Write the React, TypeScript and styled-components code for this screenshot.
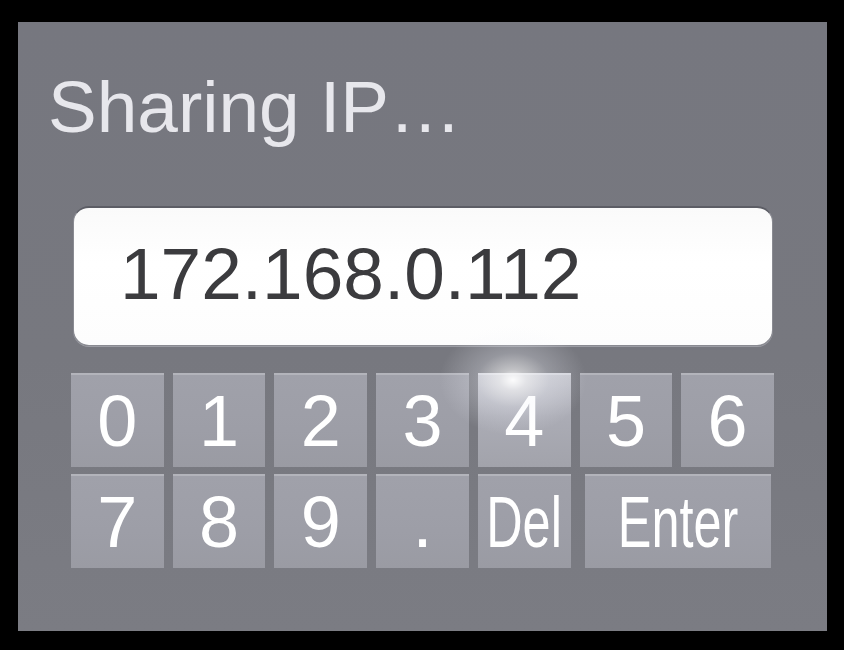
import styled, { createGlobalStyle } from "styled-components";

const GlobalStyle = createGlobalStyle`
  html, body {
    margin: 0;
    padding: 0;
    background: #000;
  }
  body {
    font-family: "Liberation Sans", Arial, sans-serif;
  }
`;

const Screen = styled.div`
  width: 844px;
  height: 650px;
  box-sizing: border-box;
  padding: 22px 17px 19px 18px;
  background: #000;
  display: flex;
`;

const Panel = styled.div`
  position: relative;
  flex: 1;
  display: flex;
  flex-direction: column;
  box-sizing: border-box;
  padding: 48px 0 0 30px;
  background: linear-gradient(180deg, #76777f 0%, #77787f 55%, #7b7c83 100%);
  overflow: hidden;
`;

const Title = styled.div`
  font-size: 73px;
  line-height: 1;
  color: #e7e7ec;
  white-space: nowrap;
`;

const Field = styled.div`
  margin: 63px 0 0 25px;
  width: 700px;
  height: 140px;
  box-sizing: border-box;
  padding: 29px 0 0 46px;
  background: linear-gradient(180deg, #fafafa 0%, #ffffff 40%, #fdfdfd 100%);
  border-radius: 16px;
  border: 1px solid #8a8b92;
  border-top: 2px solid #5c5d65;
  box-shadow: 0 1px 0 #9c9da4;
  font-size: 73px;
  line-height: 1;
  color: #3b3b3e;
`;

const Keypad = styled.div`
  margin: 27px 0 0 23px;
  width: 703px;
  display: grid;
  grid-template-columns: repeat(7, minmax(0, 1fr));
  grid-auto-rows: 94px;
  column-gap: 9px;
  row-gap: 7px;
`;

const Key = styled.div<{ $wide?: boolean; $lit?: boolean }>`
  grid-column: ${(p) => (p.$wide ? "span 2" : "span 1")};
  margin: ${(p) => (p.$wide ? "0 3px 0 5px" : "0")};
  min-width: 0;
  display: flex;
  align-items: center;
  justify-content: center;
  box-sizing: border-box;
  border-top: 2px solid ${(p) => (p.$lit ? "#d4d5dc" : "#b3b4bb")};
  background: ${(p) =>
    p.$lit
      ? "linear-gradient(180deg, #c4c5cd 0%, #abacb5 45%, #a2a3ab 100%)"
      : "linear-gradient(180deg, #a0a1aa 0%, #9d9ea7 60%, #9a9ba3 100%)"};
  color: #ffffff;
  font-size: 72px;
  line-height: 1;
  white-space: nowrap;
`;

const Label = styled.span<{ $squeeze?: boolean }>`
  display: inline-block;
  flex: none;
  transform: ${(p) => (p.$squeeze ? "scaleX(0.7)" : "none")};
`;

const Glow = styled.div`
  position: absolute;
  left: 415px;
  top: 298px;
  width: 160px;
  height: 120px;
  pointer-events: none;
  background: radial-gradient(
    ellipse at center,
    rgba(255, 255, 255, 0.95) 0%,
    rgba(255, 255, 255, 0.55) 12%,
    rgba(240, 242, 250, 0.25) 32%,
    rgba(230, 232, 240, 0) 65%
  );
`;

type KeyDef = { label: string; wide?: boolean; squeeze?: boolean; lit?: boolean };

const keys: KeyDef[] = [
  { label: "0" },
  { label: "1" },
  { label: "2" },
  { label: "3" },
  { label: "4", lit: true },
  { label: "5" },
  { label: "6" },
  { label: "7" },
  { label: "8" },
  { label: "9" },
  { label: "." },
  { label: "Del", squeeze: true },
  { label: "Enter", squeeze: true, wide: true },
];

export default function App() {
  return (
    <>
      <GlobalStyle />
      <Screen>
        <Panel>
          <Title>Sharing IP…</Title>
          <Field>172.168.0.112</Field>
          <Keypad>
            {keys.map((k) => (
              <Key key={k.label} $wide={k.wide} $lit={k.lit}>
                <Label $squeeze={k.squeeze}>{k.label}</Label>
              </Key>
            ))}
          </Keypad>
          <Glow />
        </Panel>
      </Screen>
    </>
  );
}
